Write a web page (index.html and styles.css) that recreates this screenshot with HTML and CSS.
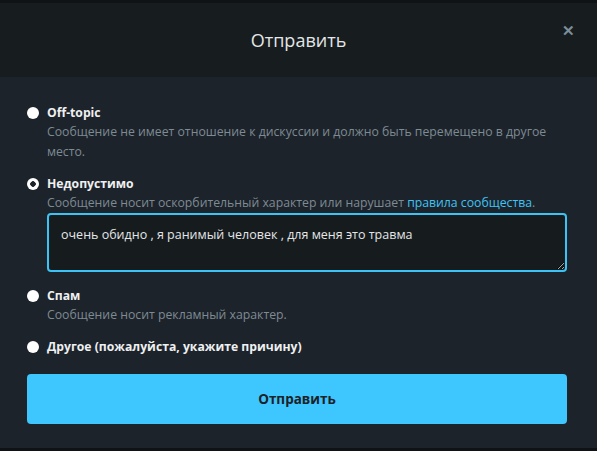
FILE: index.html
```html
<!DOCTYPE html>
<html lang="ru">
<head>
  <meta charset="UTF-8">
  <title>Отправить</title>
  <link rel="stylesheet" href="styles.css">
</head>
<body>
  <div class="modal">
    <div class="modal-header">
      <h2>Отправить</h2>
      <button class="close" type="button">&#x2715;</button>
    </div>
    <form class="modal-body">
      <label class="option">
        <input type="radio" name="reason">
        <span class="option-text">
          <span class="option-title">Off-topic</span>
          <span class="option-desc">Сообщение не имеет отношение к дискуссии и должно быть перемещено в другое место.</span>
        </span>
      </label>
      <label class="option">
        <input type="radio" name="reason" checked>
        <span class="option-text">
          <span class="option-title">Недопустимо</span>
          <span class="option-desc">Сообщение носит оскорбительный характер или нарушает <a href="#">правила сообщества</a>.</span>
          <textarea class="reason-text">очень обидно , я ранимый человек , для меня это травма</textarea>
        </span>
      </label>
      <label class="option">
        <input type="radio" name="reason">
        <span class="option-text">
          <span class="option-title">Спам</span>
          <span class="option-desc">Сообщение носит рекламный характер.</span>
        </span>
      </label>
      <label class="option">
        <input type="radio" name="reason">
        <span class="option-text">
          <span class="option-title">Другое (пожалуйста, укажите причину)</span>
        </span>
      </label>
      <button class="submit" type="button">Отправить</button>
    </form>
  </div>
</body>
</html>
```

FILE: styles.css
```css
body { margin: 0; background: #0f1316; font-family: "Open Sans", "Noto Sans", sans-serif; }
.modal { margin-top: 3px; background: #1d232a; height: 445px; }
.modal-header { position: relative; background: #171c1f; height: 74px; display: flex; align-items: center; justify-content: center; }
.modal-header h2 { margin: 0; font-size: 18px; font-weight: 400; color: #e4e6e7; }
.close { position: absolute; right: 18px; top: 15px; background: none; border: 0; color: #7b8e9a; font-size: 15px; font-weight: 700; cursor: pointer; padding: 4px; }
.modal-body { padding: 27px 30px 0 27px; display: flex; flex-direction: column; }
.option { display: flex; gap: 8px; margin-bottom: 13px; cursor: pointer; }
.option input { appearance: none; margin: 3px 0 0 0; width: 12px; height: 12px; border-radius: 50%; background: #fff; flex: none; }
.option input:checked { background: radial-gradient(circle, #1d232a 0 2.5px, #fff 3px); }
.option-text { display: flex; flex-direction: column; }
.option-title { font-size: 12.2px; font-weight: 700; color: #eef0f1; line-height: 18px; }
.option-desc { font-size: 12.25px; color: #7d8b94; line-height: 20px; }
.option-desc a { color: #3ec4f5; text-decoration: none; }
.reason-text { width: 520px; height: 59px; box-sizing: border-box; margin: 0 0 2px; background: #161b1e; color: #e4e6e7; border: 2px solid #3cc3f5; border-radius: 4px; padding: 11px 12px; font-family: inherit; font-size: 12.5px; outline: none; }
.submit { margin-top: 5px; height: 50px; width: 540px; background: #3ec6fe; border: 0; border-radius: 4px; color: #1b2228; font-family: inherit; font-size: 13.5px; font-weight: 700; cursor: pointer; }
```
